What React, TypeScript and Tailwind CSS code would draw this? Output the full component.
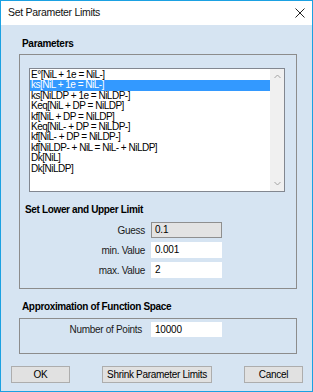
const items = [
  "E°[NiL + 1e = NiL-]",
  "ks[NiL + 1e = NiL-]",
  "ks[NiLDP + 1e = NiLDP-]",
  "Keq[NiL + DP = NiLDP]",
  "kf[NiL + DP = NiLDP]",
  "Keq[NiL- + DP = NiLDP-]",
  "kf[NiL- + DP = NiLDP-]",
  "kf[NiLDP- + NiL = NiL- + NiLDP]",
  "Dk[NiL]",
  "Dk[NiLDP]",
];

function Field({ label, value, disabled }: { label: string; value: string; disabled?: boolean }) {
  return (
    <div className="flex items-center h-[16px]">
      <span className="w-[125px] text-right tracking-[-0.3px] text-[#1a1a1a]">{label}</span>
      <div
        className={
          disabled
            ? "ml-[6px] w-[71px] h-[16px] bg-[#e3e3e3] border border-[#8f8f8f] pl-[3px] leading-[14px] tracking-[-0.2px]"
            : "ml-[6px] w-[71px] h-[16px] bg-white pl-[4px] leading-[16px] tracking-[-0.2px]"
        }
      >
        {value}
      </div>
    </div>
  );
}

function Button({ children, w }: { children: string; w: string }) {
  return (
    <button
      className={`${w} h-[17px] bg-[#e1e1e1] border border-[#adadad] text-[10px] leading-[15px] tracking-[-0.3px] text-black`}
    >
      {children}
    </button>
  );
}

export default function App() {
  return (
    <div
      className="w-[313px] h-[392px] border border-[#1ba1e2] bg-[#d6e4f2] flex flex-col text-[10px] text-black"
      style={{ fontFamily: '"Liberation Sans", Arial, sans-serif' }}
    >
      <div className="h-[24px] bg-white flex items-center justify-between pl-[7px] pr-[6px] shrink-0">
        <span className="text-[10.5px] tracking-[-0.3px] text-[#111]">Set Parameter Limits</span>
        <svg width="10" height="10" viewBox="0 0 10 10" className="mr-[1px]">
          <path d="M0.5 0.5 L9.5 9.5 M9.5 0.5 L0.5 9.5" stroke="#222" strokeWidth="1" fill="none" />
        </svg>
      </div>

      <div className="px-[18px] flex flex-col">
        <div className="mt-[13px] ml-[3px] h-[12px] leading-[12px] font-bold tracking-[-0.3px]">Parameters</div>
        <div className="mt-[4px] w-[278px] h-[235px] border border-[#8c8c8c] flex flex-col">
          <div className="mt-[13px] ml-[9px] w-[256px] h-[124px] border border-[#828790] bg-white flex">
            <div className="flex-1 pt-[1px] flex flex-col">
              {items.map((it, i) => (
                <div
                  key={it}
                  className={
                    i === 1
                      ? "h-[10.4px] leading-[10.4px] pl-[1px] tracking-[-0.5px] bg-[#3399ff] text-white whitespace-nowrap"
                      : "h-[10.4px] leading-[10.4px] pl-[1px] tracking-[-0.5px] whitespace-nowrap"
                  }
                >
                  {it}
                </div>
              ))}
            </div>
            <div className="w-[14px] bg-[#f0f0f0] flex flex-col items-center justify-between py-[5px]">
              <svg width="7" height="5" viewBox="0 0 7 5">
                <path d="M0.5 4 L3.5 1 L6.5 4" stroke="#a3a3a3" strokeWidth="1" fill="none" />
              </svg>
              <svg width="7" height="5" viewBox="0 0 7 5">
                <path d="M0.5 1 L3.5 4 L6.5 1" stroke="#a3a3a3" strokeWidth="1" fill="none" />
              </svg>
            </div>
          </div>

          <div className="mt-[12px] ml-[5px] h-[12px] leading-[12px] font-bold tracking-[-0.35px]">
            Set Lower and Upper Limit
          </div>
          <div className="mt-[6px] flex flex-col gap-[4px]">
            <Field label="Guess" value="0.1" disabled />
            <Field label="min. Value" value="0.001" />
            <Field label="max. Value" value="2" />
          </div>
        </div>

        <div className="mt-[12px] ml-[3px] h-[12px] leading-[12px] font-bold tracking-[-0.35px]">
          Approximation of Function Space
        </div>
        <div className="mt-[5px] w-[278px] h-[36px] border border-[#8c8c8c]">
          <div className="mt-[3px] flex items-center h-[15px]">
            <span className="w-[122px] text-right tracking-[-0.3px] text-[#1a1a1a]">Number of Points</span>
            <div className="ml-[9px] w-[71px] h-[15px] bg-white pl-[4px] leading-[15px] tracking-[-0.2px]">10000</div>
          </div>
        </div>
      </div>

      <div className="mt-[12px] pl-[10px] pr-[9px] flex justify-between">
        <Button w="w-[59px]">OK</Button>
        <Button w="w-[110px]">Shrink Parameter Limits</Button>
        <Button w="w-[59px]">Cancel</Button>
      </div>
    </div>
  );
}
